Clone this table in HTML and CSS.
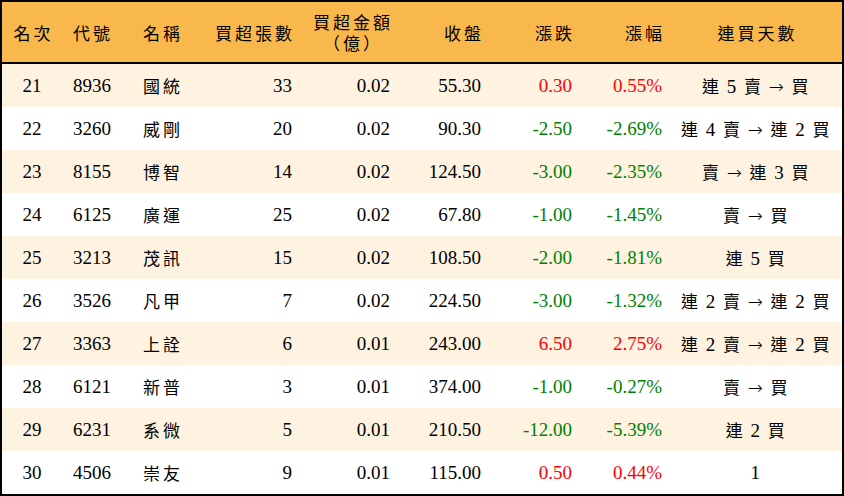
FILE: index.html
```html
<!DOCTYPE html>
<html lang="zh-Hant">
<head>
<meta charset="utf-8">
<link rel="stylesheet" href="styles.css">
</head>
<body>
<table class="rank">
  <colgroup>
    <col class="w1"><col class="w2"><col class="w3"><col class="w4"><col class="w5"><col class="w6"><col class="w7"><col class="w8"><col class="w9">
  </colgroup>
  <thead>
    <tr>
      <th class="c"><span class="zh">名次</span></th>
      <th class="l2"><span class="zh">代號</span></th>
      <th class="l3"><span class="zh">名稱</span></th>
      <th class="r4"><span class="zh">買超張數</span></th>
      <th class="r5"><span class="zh two"><span class="ln">買超金額</span><span class="ln">（億）</span></span></th>
      <th class="r6"><span class="zh">收盤</span></th>
      <th class="r7"><span class="zh">漲跌</span></th>
      <th class="r8"><span class="zh">漲幅</span></th>
      <th class="c"><span class="zh">連買天數</span></th>
    </tr>
  </thead>
  <tbody>
    <tr class="odd">
      <td class="c">21</td><td class="l2">8936</td><td class="l3"><span class="zh">國統</span></td><td class="r4">33</td><td class="r5">0.02</td><td class="r6">55.30</td><td class="r7 up">0.30</td><td class="r8 up">0.55%</td>
      <td class="c days"><span class="k">連</span> 5 <span class="k">賣</span> <span class="ar">→</span> <span class="k">買</span></td>
    </tr>
    <tr>
      <td class="c">22</td><td class="l2">3260</td><td class="l3"><span class="zh">威剛</span></td><td class="r4">20</td><td class="r5">0.02</td><td class="r6">90.30</td><td class="r7 down">-2.50</td><td class="r8 down">-2.69%</td>
      <td class="c days"><span class="k">連</span> 4 <span class="k">賣</span> <span class="ar">→</span> <span class="k">連</span> 2 <span class="k">買</span></td>
    </tr>
    <tr class="odd">
      <td class="c">23</td><td class="l2">8155</td><td class="l3"><span class="zh">博智</span></td><td class="r4">14</td><td class="r5">0.02</td><td class="r6">124.50</td><td class="r7 down">-3.00</td><td class="r8 down">-2.35%</td>
      <td class="c days"><span class="k">賣</span> <span class="ar">→</span> <span class="k">連</span> 3 <span class="k">買</span></td>
    </tr>
    <tr>
      <td class="c">24</td><td class="l2">6125</td><td class="l3"><span class="zh">廣運</span></td><td class="r4">25</td><td class="r5">0.02</td><td class="r6">67.80</td><td class="r7 down">-1.00</td><td class="r8 down">-1.45%</td>
      <td class="c days"><span class="k">賣</span> <span class="ar">→</span> <span class="k">買</span></td>
    </tr>
    <tr class="odd">
      <td class="c">25</td><td class="l2">3213</td><td class="l3"><span class="zh">茂訊</span></td><td class="r4">15</td><td class="r5">0.02</td><td class="r6">108.50</td><td class="r7 down">-2.00</td><td class="r8 down">-1.81%</td>
      <td class="c days"><span class="k">連</span> 5 <span class="k">買</span></td>
    </tr>
    <tr>
      <td class="c">26</td><td class="l2">3526</td><td class="l3"><span class="zh">凡甲</span></td><td class="r4">7</td><td class="r5">0.02</td><td class="r6">224.50</td><td class="r7 down">-3.00</td><td class="r8 down">-1.32%</td>
      <td class="c days"><span class="k">連</span> 2 <span class="k">賣</span> <span class="ar">→</span> <span class="k">連</span> 2 <span class="k">買</span></td>
    </tr>
    <tr class="odd">
      <td class="c">27</td><td class="l2">3363</td><td class="l3"><span class="zh">上詮</span></td><td class="r4">6</td><td class="r5">0.01</td><td class="r6">243.00</td><td class="r7 up">6.50</td><td class="r8 up">2.75%</td>
      <td class="c days"><span class="k">連</span> 2 <span class="k">賣</span> <span class="ar">→</span> <span class="k">連</span> 2 <span class="k">買</span></td>
    </tr>
    <tr>
      <td class="c">28</td><td class="l2">6121</td><td class="l3"><span class="zh">新普</span></td><td class="r4">3</td><td class="r5">0.01</td><td class="r6">374.00</td><td class="r7 down">-1.00</td><td class="r8 down">-0.27%</td>
      <td class="c days"><span class="k">賣</span> <span class="ar">→</span> <span class="k">買</span></td>
    </tr>
    <tr class="odd">
      <td class="c">29</td><td class="l2">6231</td><td class="l3"><span class="zh">系微</span></td><td class="r4">5</td><td class="r5">0.01</td><td class="r6">210.50</td><td class="r7 down">-12.00</td><td class="r8 down">-5.39%</td>
      <td class="c days"><span class="k">連</span> 2 <span class="k">買</span></td>
    </tr>
    <tr>
      <td class="c">30</td><td class="l2">4506</td><td class="l3"><span class="zh">崇友</span></td><td class="r4">9</td><td class="r5">0.01</td><td class="r6">115.00</td><td class="r7 up">0.50</td><td class="r8 up">0.44%</td>
      <td class="c days">1</td>
    </tr>
  </tbody>
</table>
</body>
</html>
```

FILE: styles.css
```css
html, body {
  margin: 0;
  padding: 0;
  background: #ffffff;
}

.rank {
  width: 844px;
  table-layout: fixed;
  border-collapse: separate;
  border-spacing: 0;
  border: 2px solid #000;
  font-family: "Liberation Serif", "Noto Sans CJK TC", serif;
  font-size: 19px;
  color: #000;
}

.w1 { width: 60px; }
.w2 { width: 70px; }
.w3 { width: 68px; }
.w4 { width: 102px; }
.w5 { width: 98px; }
.w6 { width: 90px; }
.w7 { width: 90px; }
.w8 { width: 90px; }
.w9 { width: 172px; }

.rank th {
  height: 60px;
  padding: 0;
  background: #f9b84b;
  border-bottom: 2px solid #000;
  font-weight: normal;
  vertical-align: middle;
}

.rank td {
  height: 43px;
  padding: 0;
  vertical-align: middle;
  white-space: nowrap;
}

.rank tr.odd td {
  background: #fef3e0;
}

.zh {
  font-family: "Noto Sans CJK TC", sans-serif;
  font-size: 17px;
  letter-spacing: 3px;
  margin-right: -3px;
}

.zh.two {
  display: inline-flex;
  flex-direction: column;
  align-items: center;
  vertical-align: middle;
  gap: 0;
}

.ln {
  display: block;
  height: 21px;
  line-height: 21px;
}

.c { text-align: center; }
.l2 { text-align: left; padding-left: 11px !important; }
.l3 { text-align: left; padding-left: 11px !important; }
.r4 { text-align: right; padding-right: 10px !important; }
.r5 { text-align: right; padding-right: 10px !important; }
.r6 { text-align: right; padding-right: 9px !important; }
.r7 { text-align: right; padding-right: 8px !important; }
.r8 { text-align: right; padding-right: 8px !important; }

.up { color: #ff0000; }
.down { color: #008000; }

.days {
  letter-spacing: 1.5px;
}

.k {
  font-family: "Noto Sans CJK TC", sans-serif;
  font-size: 17px;
}

.ar {
  font-family: "DejaVu Sans", sans-serif;
  font-size: 18px;
  font-weight: 300;
}
```
